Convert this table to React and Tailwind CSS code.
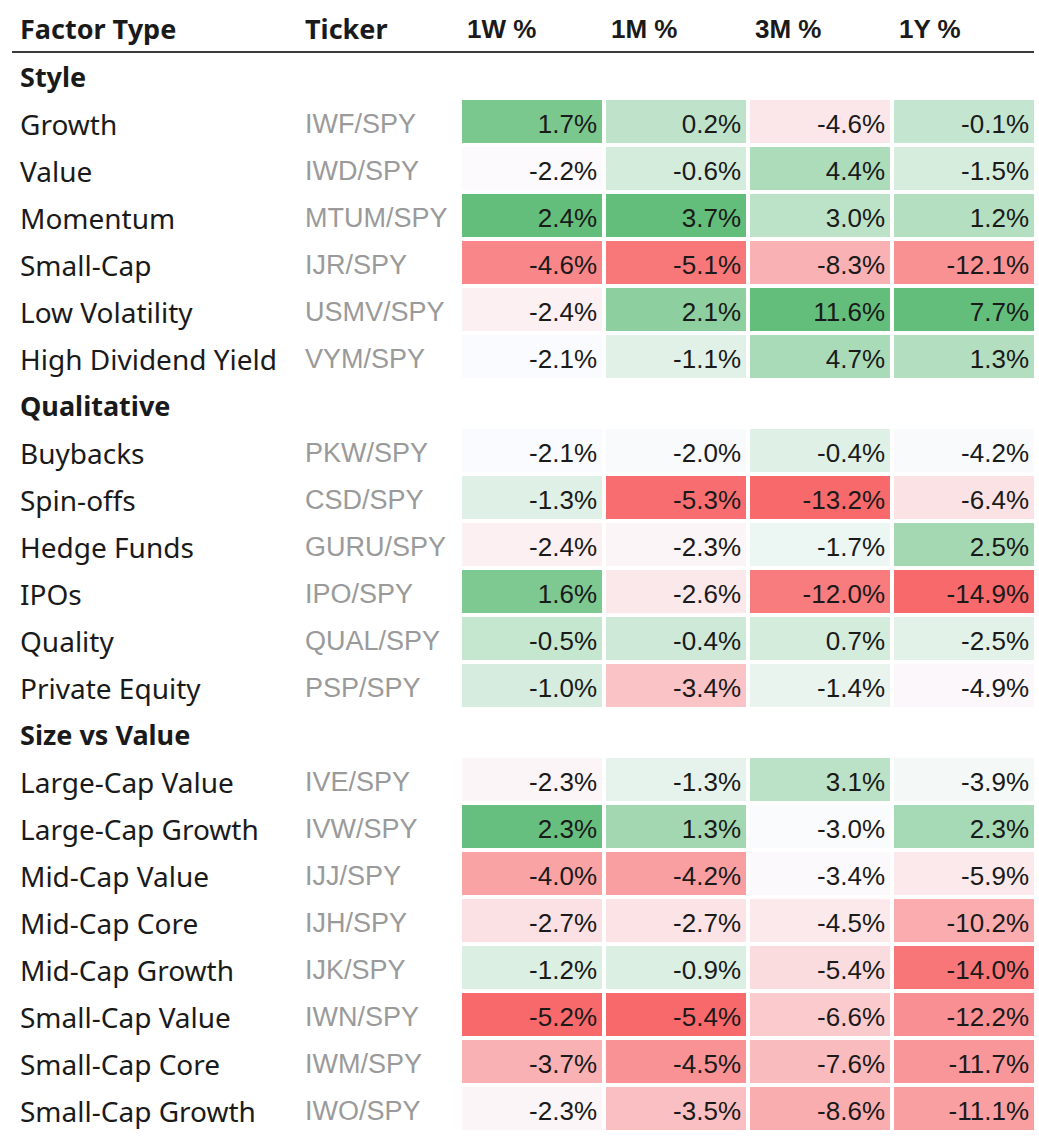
import React from "react";

const sections = [
  {
    title: "Style",
    rows: [
      ["Growth", "IWF/SPY", 1.7, 0.2, -4.6, -0.1],
      ["Value", "IWD/SPY", -2.2, -0.6, 4.4, -1.5],
      ["Momentum", "MTUM/SPY", 2.4, 3.7, 3.0, 1.2],
      ["Small-Cap", "IJR/SPY", -4.6, -5.1, -8.3, -12.1],
      ["Low Volatility", "USMV/SPY", -2.4, 2.1, 11.6, 7.7],
      ["High Dividend Yield", "VYM/SPY", -2.1, -1.1, 4.7, 1.3],
    ],
  },
  {
    title: "Qualitative",
    rows: [
      ["Buybacks", "PKW/SPY", -2.1, -2.0, -0.4, -4.2],
      ["Spin-offs", "CSD/SPY", -1.3, -5.3, -13.2, -6.4],
      ["Hedge Funds", "GURU/SPY", -2.4, -2.3, -1.7, 2.5],
      ["IPOs", "IPO/SPY", 1.6, -2.6, -12.0, -14.9],
      ["Quality", "QUAL/SPY", -0.5, -0.4, 0.7, -2.5],
      ["Private Equity", "PSP/SPY", -1.0, -3.4, -1.4, -4.9],
    ],
  },
  {
    title: "Size vs Value",
    rows: [
      ["Large-Cap Value", "IVE/SPY", -2.3, -1.3, 3.1, -3.9],
      ["Large-Cap Growth", "IVW/SPY", 2.3, 1.3, -3.0, 2.3],
      ["Mid-Cap Value", "IJJ/SPY", -4.0, -4.2, -3.4, -5.9],
      ["Mid-Cap Core", "IJH/SPY", -2.7, -2.7, -4.5, -10.2],
      ["Mid-Cap Growth", "IJK/SPY", -1.2, -0.9, -5.4, -14.0],
      ["Small-Cap Value", "IWN/SPY", -5.2, -5.4, -6.6, -12.2],
      ["Small-Cap Core", "IWM/SPY", -3.7, -4.5, -7.6, -11.7],
      ["Small-Cap Growth", "IWO/SPY", -2.3, -3.5, -8.6, -11.1],
    ],
  },
];

const allRows = sections.flatMap((s) => s.rows);

// excel style 3 colour scale: min red, median white, max green
const RED = [248, 105, 107];
const MID = [252, 252, 255];
const GREEN = [99, 190, 123];

const colStats = [2, 3, 4, 5].map((i) => {
  const vals = allRows.map((r) => r[i]).sort((a, b) => a - b);
  const n = vals.length;
  const med = n % 2 ? vals[(n - 1) / 2] : (vals[n / 2 - 1] + vals[n / 2]) / 2;
  return { min: vals[0], max: vals[n - 1], med };
});

const mix = (a, b, t) =>
  `rgb(${a.map((v, k) => Math.round(v + (b[k] - v) * t)).join(",")})`;

const cellColor = (v, col) => {
  const { min, max, med } = colStats[col];
  if (v >= med) return mix(MID, GREEN, (v - med) / (max - med));
  return mix(MID, RED, (med - v) / (med - min));
};

const App = () => {
  return (
    <div className="w-[1039px] h-[1141px] bg-white text-[#1a1a1a]">
      <div className="ml-3 w-[1022px]">
        <div className="flex items-center h-[53px] pt-[8px] border-b-2 border-[#3a3a3a] font-bold">
          <div className="w-[293px] pl-2 text-[27px] font-['Noto_Sans','Open_Sans',sans-serif]">
            Factor Type
          </div>
          <div className="w-[157px] text-[27px] font-['Noto_Sans','Open_Sans',sans-serif]">
            Ticker
          </div>
          <div className="flex gap-1">
            {["1W %", "1M %", "3M %", "1Y %"].map((h) => (
              <div
                key={h}
                className="w-[140px] pl-[5px] text-[26px] font-['Liberation_Sans',Arial,sans-serif]"
              >
                {h}
              </div>
            ))}
          </div>
        </div>

        {sections.map((section) => (
          <div key={section.title}>
            <div className="h-[47px] flex items-center pl-2 pt-[1px] text-[27px] font-bold font-['Noto_Sans','Open_Sans',sans-serif]">
              {section.title}
            </div>
            {section.rows.map((row) => (
              <div key={row[0]} className="h-[47px] pb-1 flex">
                <div className="w-[293px] pl-2 flex items-center pt-[4px] text-[28px] font-['Noto_Sans','Open_Sans',sans-serif]">
                  {row[0]}
                </div>
                <div className="w-[157px] flex items-center pt-[5px] text-[27px] text-[#9a9a9a] font-['Liberation_Sans',Arial,sans-serif]">
                  {row[1]}
                </div>
                <div className="flex gap-1">
                  {row.slice(2).map((v, i) => (
                    <div
                      key={i}
                      className="w-[140px] h-full flex items-center justify-end pr-[5px] pt-[5px] text-[26px] font-['Liberation_Sans',Arial,sans-serif]"
                      style={{ backgroundColor: cellColor(v, i) }}
                    >
                      {v.toFixed(1)}%
                    </div>
                  ))}
                </div>
              </div>
            ))}
          </div>
        ))}
      </div>
    </div>
  );
};

export default App;
